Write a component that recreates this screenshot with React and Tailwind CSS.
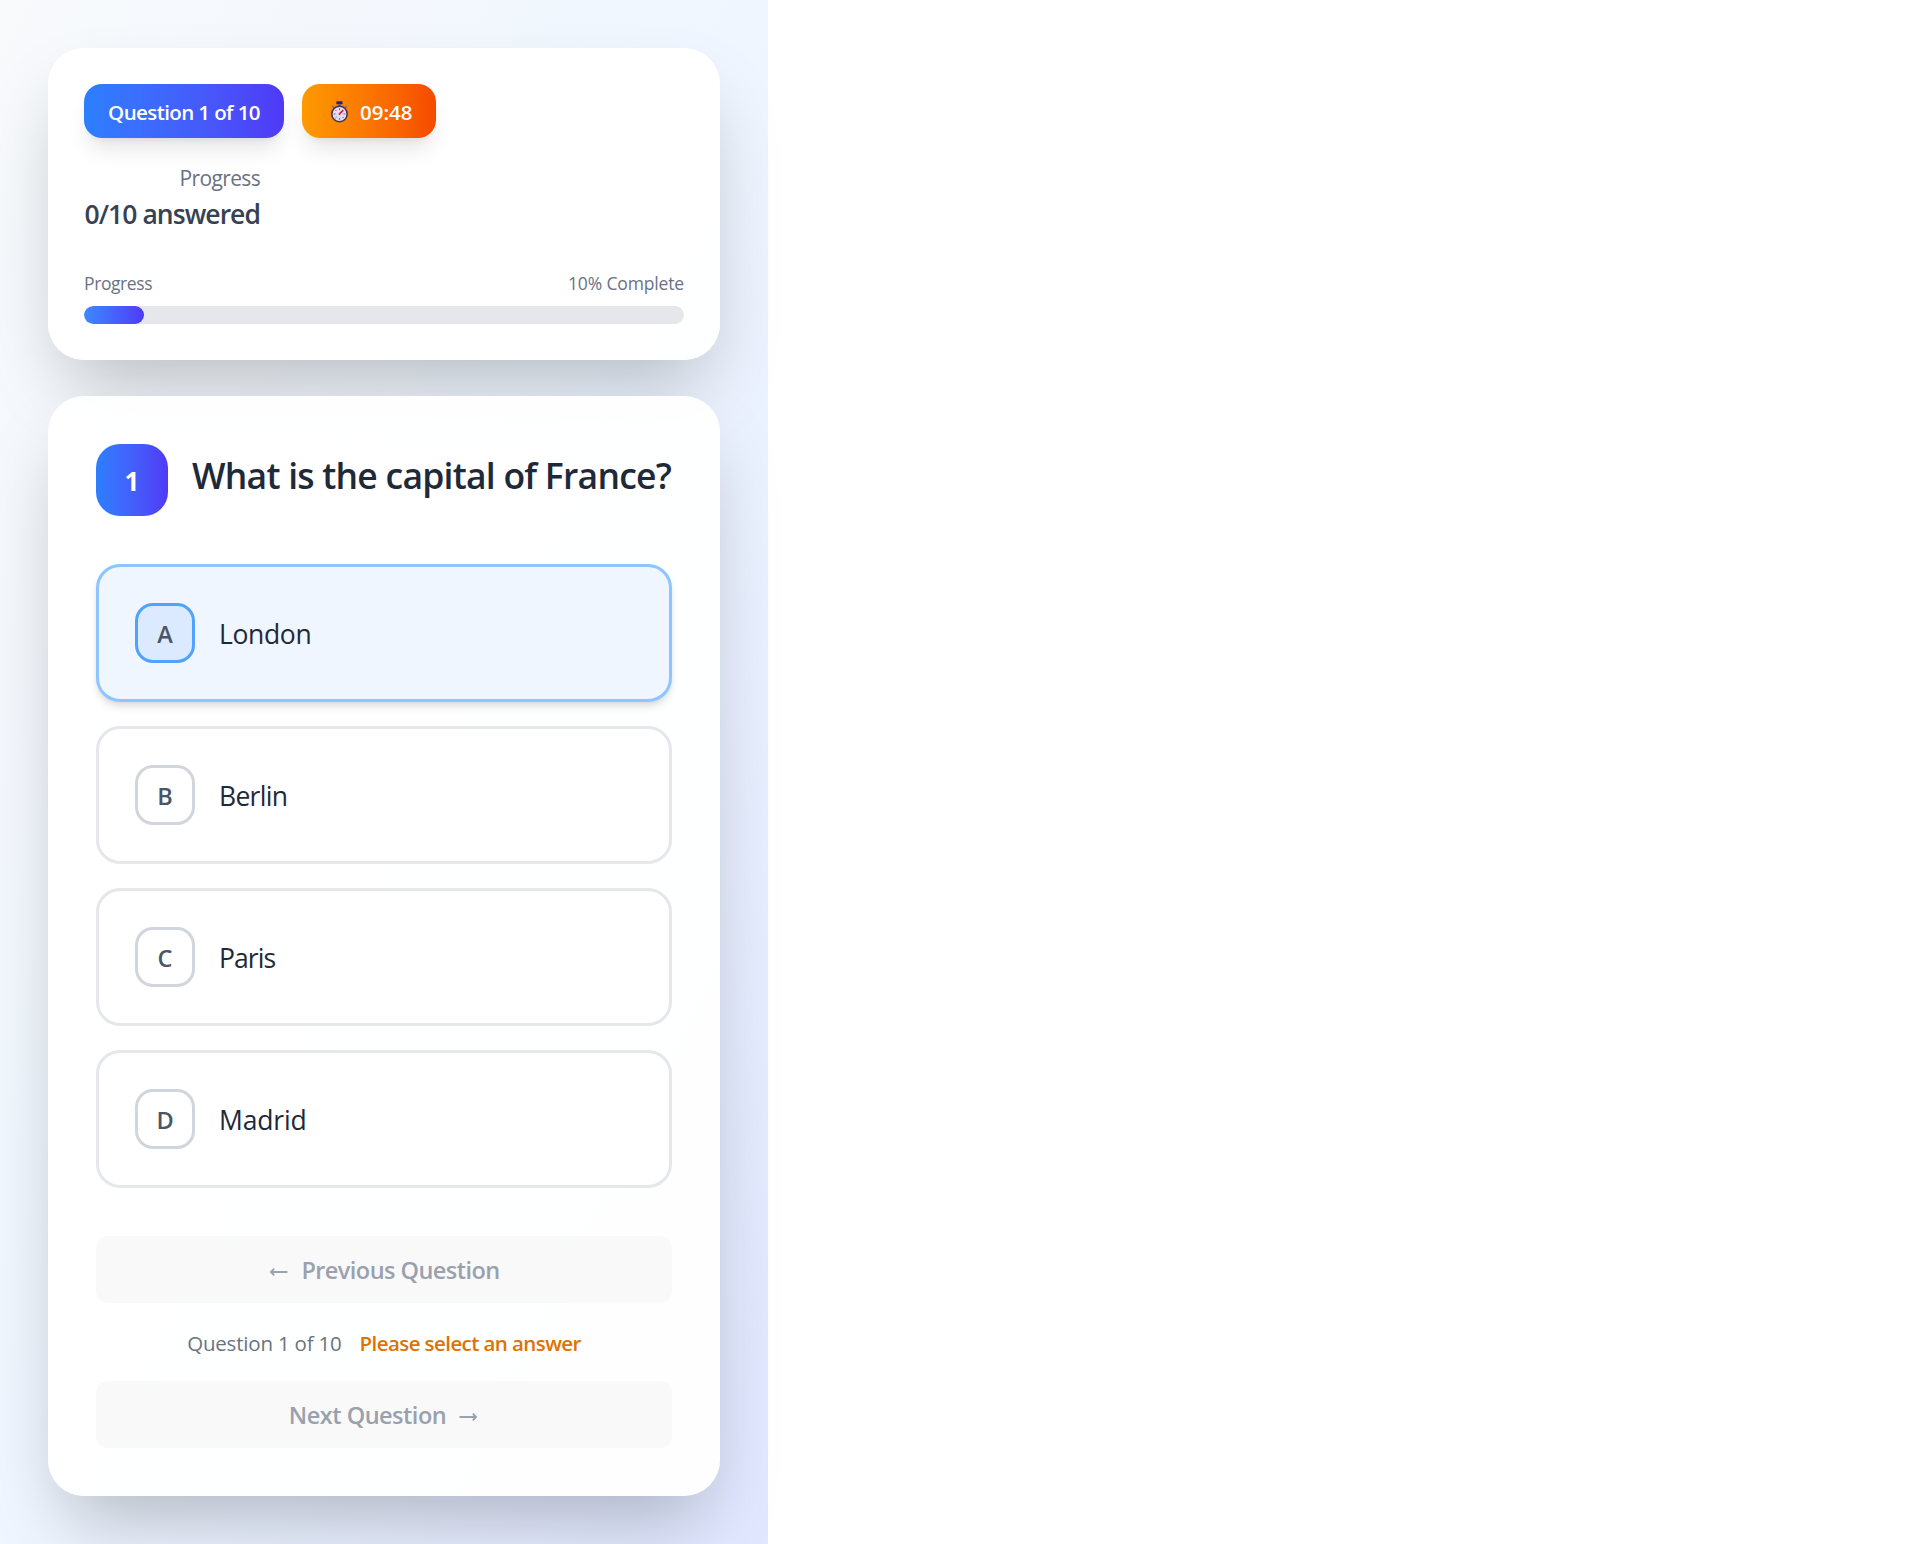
const options = [
  { letter: 'A', label: 'London', active: true, tracking: 'tracking-[-0.35px]' },
  { letter: 'B', label: 'Berlin', tracking: 'tracking-[-0.7px]' },
  { letter: 'C', label: 'Paris', tracking: 'tracking-[-0.9px]' },
  { letter: 'D', label: 'Madrid', tracking: 'tracking-[-0.15px]' },
];

function Stopwatch() {
  return (
    <svg className="-mt-px ml-[4px] h-[22px] w-[19px]" viewBox="0 0 19 22" fill="none">
      <rect x="6.4" y="0.3" width="6.2" height="3" rx="0.6" fill="#3b2550" />
      <rect x="8.2" y="3" width="2.6" height="2.4" fill="#6b5a80" />
      <path d="M2.6 5.4 4 6.8M16.4 5.4 15 6.8" stroke="#7a6a8c" strokeWidth="1.6" strokeLinecap="round" />
      <circle cx="9.5" cy="13" r="7.7" fill="#e3dcec" stroke="#46305e" strokeWidth="1.6" />
      <path
        d="M9.5 7.2v1.8M9.5 17v1.8M3.7 13h1.8M13.5 13h1.8M5.4 8.9l1.1 1.1M12.6 16l1.1 1.1M6.5 16l-1.1 1.1"
        stroke="#6f6284"
        strokeWidth="1"
      />
      <path d="m8.9 13.6 4.4-4.4" stroke="#d81b60" strokeWidth="1.7" />
    </svg>
  );
}

function Arrow({ right }) {
  return (
    <svg className={right ? 'mt-[3px] h-3 w-[21px] rotate-180' : 'mt-[3px] h-3 w-[21px]'} viewBox="0 0 21 12" fill="none">
      <path d="M3 6H19.5M6.2 2.6 2.9 6l3.3 3.4" stroke="#99a1af" strokeWidth="1.8" />
    </svg>
  );
}

function Option({ letter, label, active, tracking }) {
  return (
    <button
      className={
        active
          ? 'flex h-[138px] items-center gap-6 rounded-3xl border-3 border-[#8ec5ff] bg-[#eff6ff] px-9 shadow-[0_6px_9px_-1.5px_rgba(0,0,0,0.1),0_3px_6px_-3px_rgba(0,0,0,0.1)]'
          : 'flex h-[138px] items-center gap-6 rounded-3xl border-3 border-[#e5e7eb] bg-white px-9'
      }
    >
      <span
        className={
          active
            ? 'flex size-15 items-center justify-center rounded-[18px] border-3 border-[#51a2ff] bg-[#dbeafe] pt-[3px] text-[23.5px] font-semibold text-[#4a5565]'
            : 'flex size-15 items-center justify-center rounded-[18px] border-3 border-[#d1d5dc] pt-[3px] text-[23.5px] font-semibold text-[#4a5565]'
        }
      >
        {letter}
      </span>
      <span className={`pt-[2px] text-[26.5px] leading-[42px] text-[#1e2939] ${tracking}`}>{label}</span>
    </button>
  );
}

export default function App() {
  return (
    <div className="min-h-[1544px] overflow-hidden bg-white font-['Open_Sans','Noto_Sans',sans-serif]">
      <div className="flex h-[1544px] w-[768px] flex-col gap-9 bg-linear-to-br from-[#f8fafc] via-[#eff6ff] to-[#e0e7ff] p-12">
        <section className="h-[312px] rounded-[36px] bg-white/95 p-9 shadow-[0_37.5px_75px_-18px_rgba(0,0,0,0.25)]">
          <div className="flex gap-[18px]">
            <div className="flex h-[54px] w-[200px] items-center justify-center rounded-[18px] bg-linear-to-r from-[#2b7fff] to-[#4f39f6] pt-[2px] text-[20.5px] font-semibold tracking-[-0.6px] whitespace-nowrap text-white shadow-[0_15px_22.5px_-4.5px_rgba(0,0,0,0.1),0_6px_9px_-6px_rgba(0,0,0,0.1)]">
              Question 1 of 10
            </div>
            <div className="flex h-[54px] w-[134px] items-center gap-[11px] rounded-[18px] bg-linear-to-r from-[#fe9a00] to-[#f54900] pt-[2px] pl-6 text-[20.5px] font-semibold text-white shadow-[0_15px_22.5px_-4.5px_rgba(0,0,0,0.1),0_6px_9px_-6px_rgba(0,0,0,0.1)]">
              <Stopwatch />
              <span>09:48</span>
            </div>
          </div>
          <div className="mt-[25px] w-[176px] text-right whitespace-nowrap">
            <div className="text-[21px] leading-[30px] tracking-[-0.65px] text-[#6a7282]">Progress</div>
            <div className="text-[26.5px] leading-[42px] font-semibold tracking-[-0.95px] text-[#364153]">0/10 answered</div>
          </div>
          <div className="mt-9 flex justify-between text-[17.5px] leading-6 tracking-[-0.25px] text-[#6a7282]">
            <span className="tracking-[-0.4px]">Progress</span>
            <span className="tracking-[-0.15px]">10% Complete</span>
          </div>
          <div className="mt-[11px] h-[18px] overflow-hidden rounded-full bg-[#e5e7eb]">
            <div className="h-full w-[10%] rounded-full bg-linear-to-r from-[#3f88ff] via-[#4562ff] to-[#4f39f6]" />
          </div>
        </section>

        <section className="h-[1100px] rounded-[36px] bg-white/95 p-12 shadow-[0_37.5px_75px_-18px_rgba(0,0,0,0.25)]">
          <div className="flex items-start gap-6">
            <div className="flex size-18 items-center justify-center rounded-3xl bg-linear-to-r from-[#2b7fff] to-[#4f39f6] pt-[2px] text-[26px] font-bold text-white">
              1
            </div>
            <h1 className="text-[35.5px] leading-[62px] font-semibold tracking-[-0.76px] whitespace-nowrap text-[#1e2939]">
              What is the capital of France?
            </h1>
          </div>

          <div className="mt-12 flex flex-col gap-6">
            {options.map((option) => (
              <Option key={option.letter} {...option} />
            ))}
          </div>

          <div className="mt-12 flex flex-col gap-6">
            <button className="flex h-[67px] items-center justify-center gap-3 rounded-xl bg-[#f9f9f9] pt-[2px] text-[23.5px] font-semibold tracking-[-0.55px] text-[#99a1af]">
              <Arrow />
              Previous Question
            </button>
            <div className="flex h-[30px] justify-center gap-[18px] text-[20.5px] leading-[32px]">
              <span className="tracking-[-0.2px] text-[#6a7282]">Question 1 of 10</span>
              <span className="font-semibold tracking-[-0.58px] text-[#e17100]">Please select an answer</span>
            </div>
            <button className="flex h-[67px] items-center justify-center gap-3 rounded-xl bg-[#f9f9f9] pt-[2px] text-[23.5px] font-semibold tracking-[-0.5px] text-[#99a1af]">
              Next Question
              <Arrow right />
            </button>
          </div>
        </section>
      </div>
    </div>
  );
}
